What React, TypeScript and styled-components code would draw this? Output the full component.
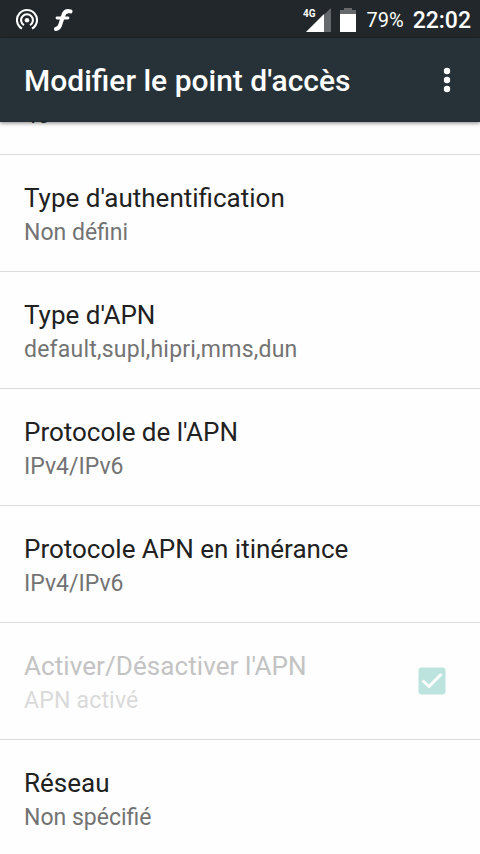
import React from "react";
import styled, { createGlobalStyle } from "styled-components";

const Global = createGlobalStyle`
  * { box-sizing: border-box; }
  body { margin: 0; background: #fefefe; font-family: Roboto, sans-serif; }
`;
const Screen = styled.div`
  width: 480px; height: 854px; overflow: hidden; display: flex; flex-direction: column; background: #fefefe;
`;
const StatusBar = styled.header`
  height: 38px; flex: none; display: flex; align-items: center; justify-content: space-between;
  padding: 1px 9px 0 16px; background: #21272a; color: #fff;
`;
const StatusGroup = styled.div<{ $gap: number }>`
  display: flex; align-items: center; gap: ${p => p.$gap}px;
`;
const Icon = styled.svg` display: block; flex: none; `;
const Battery = styled.span` font-size: 20px; line-height: 22px; padding-top: 1px; `;
const Clock = styled.span` font-size: 23px; line-height: 23px; padding-top: 1px; font-weight: 500; `;
const Toolbar = styled.div`
  height: 84px; flex: none; display: flex; align-items: center; justify-content: space-between;
  padding: 0 29px 0 24px; background: #263238; color: #fff; box-shadow: 0 1px 4px rgba(0,0,0,.5);
`;
const Title = styled.h1` margin: 0; padding-top: 2px; font-size: 30px; line-height: 36px; font-weight: 500; white-space: nowrap; `;
const List = styled.main` flex: 1; min-height: 0; display: flex; flex-direction: column; `;
const Partial = styled.div`
  height: 33px; flex: none; border-bottom: 1px solid #dcdcdc; padding-left: 24px;
  font-size: 23px; line-height: 28px; color: #1c2529;
`;
const Clipped = styled.div` margin-top: -20px; clip-path: inset(19px 0 0 0); `;
const Row = styled.section<{ $disabled?: boolean }>`
  height: 117px; flex: none; display: flex; align-items: center; justify-content: space-between;
  padding: 0 34px 0 24px; border-bottom: 1px solid #dcdcdc;
  color: ${p => (p.$disabled ? "#c3c3c3" : "#212121")};
`;
const Copy = styled.div` display: grid; row-gap: 1px; padding-top: 4px; `;
const Label = styled.div<{ $tracking?: number }>`
  font-size: 26px; line-height: 34px; white-space: nowrap; letter-spacing: ${p => (p.$tracking ? `${p.$tracking}px` : "normal")};
`;
const Value = styled(Label)<{ $disabled?: boolean }>`
  font-size: 23px; color: ${p => (p.$disabled ? "#dadada" : "#737373")};
`;

type Setting = { label: string; value: string; disabled?: boolean; labelTracking?: number; valueTracking?: number };
const rows: Setting[] = [
  { label: "Type d'authentification", value: "Non défini" },
  { label: "Type d'APN", value: "default,supl,hipri,mms,dun", valueTracking: 0.22 },
  { label: "Protocole de l'APN", value: "IPv4/IPv6" },
  { label: "Protocole APN en itinérance", value: "IPv4/IPv6" },
  { label: "Activer/Désactiver l'APN", value: "APN activé", disabled: true, labelTracking: 0.08, valueTracking: 0.2 },
  { label: "Réseau", value: "Non spécifié" },
];

export default function App() {
  return (
    <Screen>
      <Global />
      <StatusBar>
        <StatusGroup $gap={14}>
          <Icon width="22" height="24" viewBox="0 0 22 24" fill="none" stroke="#fff" strokeWidth="2.1">
            <path d="M6 20.7a10 10 0 1 1 10 0M8 17.2a5.9 5.9 0 1 1 6 0" />
            <circle cx="11" cy="12.3" r="2.3" fill="#fff" stroke="none" />
          </Icon>
          <Icon width="22" height="24" viewBox="0 0 22 24" fill="none" stroke="#fff" strokeLinecap="round">
            <path d="M18.5 3.4c-4-1-6.2.4-7.2 4L8.5 16c-.8 3-2 4.5-4.5 5" strokeWidth="4" />
            <path d="M5 10h11" strokeWidth="2.8" />
          </Icon>
        </StatusGroup>
        <StatusGroup $gap={9}>
          <Icon width="28" height="26" viewBox="0 0 28 26">
            <path d="M3 25L28 1v24z" fill="#65696b" /><path d="M3 25L21 7v18z" fill="#fff" />
            <text x="0" y="10" fontFamily="Roboto" fontSize="11" fontWeight="700" textLength="12.5" lengthAdjust="spacingAndGlyphs" fill="#fff">4G</text>
          </Icon>
          <Icon width="18" height="26" viewBox="0 0 18 26"><path d="M4 1h8v2h4v22H0V3h4z" fill="#65696b" /><path d="M0 7h16v18H0z" fill="#fff" /></Icon>
          <Battery>79%</Battery>
          <Clock>22:02</Clock>
        </StatusGroup>
      </StatusBar>
      <Toolbar>
        <Title>Modifier le point d'accès</Title>
        <Icon width="8" height="26" viewBox="0 0 8 26" fill="#fff"><circle cx="4" cy="4" r="3.2" /><circle cx="4" cy="13" r="3.2" /><circle cx="4" cy="22" r="3.2" /></Icon>
      </Toolbar>
      <List>
        <Partial><Clipped>46</Clipped></Partial>
        {rows.map(r => (
          <Row key={r.label} $disabled={r.disabled}>
            <Copy><Label $tracking={r.labelTracking}>{r.label}</Label><Value $tracking={r.valueTracking} $disabled={r.disabled}>{r.value}</Value></Copy>
            {r.disabled && (
              <Icon width="28" height="28" viewBox="0 0 28 28">
                <rect x=".5" y=".5" width="27" height="27" rx="3" fill="#bde3df" /><path d="M4.5 13.5l6.5 6L23.5 7" fill="none" stroke="#fff" strokeWidth="3" />
              </Icon>
            )}
          </Row>
        ))}
      </List>
    </Screen>
  );
}
